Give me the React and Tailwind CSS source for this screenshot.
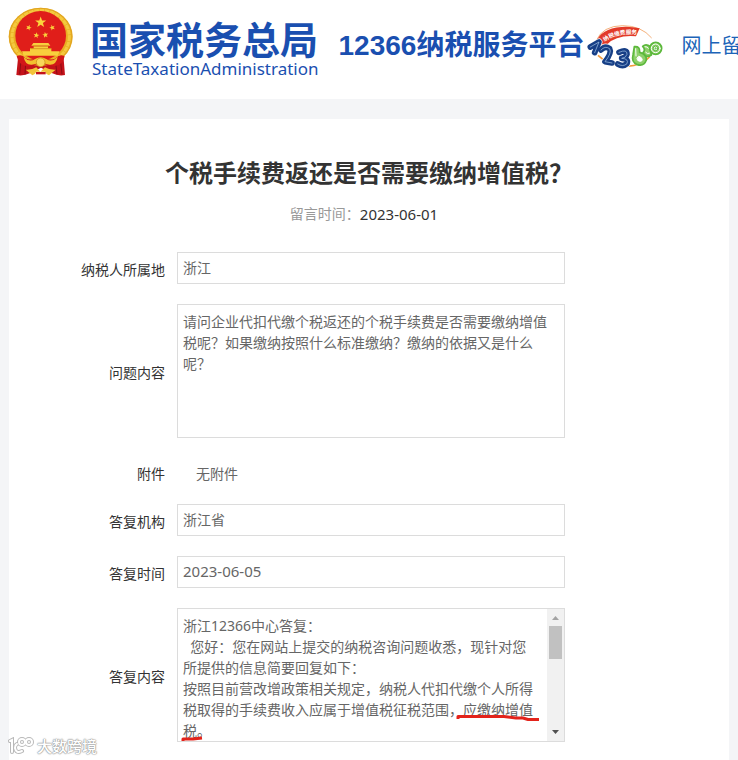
import React from "react";

const QUESTION =
  "请问企业代扣代缴个税返还的个税手续费是否需要缴纳增值税呢？如果缴纳按照什么标准缴纳？缴纳的依据又是什么呢？";

const REPLY = `浙江12366中心答复：
  您好：您在网站上提交的纳税咨询问题收悉，现针对您所提供的信息简要回复如下：
按照目前营改增政策相关规定，纳税人代扣代缴个人所得税取得的手续费收入应属于增值税征税范围，应缴纳增值税。`;

const STAR = "M0,-10 2.4,-3.2 9.5,-3.1 3.8,1.2 5.9,8.1 0,4 -5.9,8.1 -3.8,1.2 -9.5,-3.1 -2.4,-3.2Z";

function Emblem() {
  return (
    <svg className="w-[66px] h-[72px] shrink-0" viewBox="25 15 198 216" aria-hidden="true">
      {/* Red drapes */}
      <path d="M56 162 L50 222 Q72 226 92 216 L124 200 L156 216 Q176 226 196 222 L191 162Z" fill="#c4121a" />
      <path d="M64 176 L60 220 M78 186 L76 220 M182 176 L187 220 M168 186 L172 220" stroke="#8e0c12" strokeWidth="3" />
      {/* Golden wreath */}
      <ellipse cx="123" cy="107" rx="96" ry="87" fill="#e9ae22" />
      <ellipse cx="123" cy="107" rx="86" ry="79" fill="none" stroke="#f4c93f" strokeWidth="9" strokeDasharray="14 2" />
      <ellipse cx="123" cy="107" rx="94" ry="85" fill="none" stroke="#dca021" strokeWidth="2" />
      <ellipse cx="123" cy="104" rx="76" ry="74" fill="#e01e1a" />
      {/* Stars */}
      <g fill="#fbd43c">
        <path d={STAR} transform="translate(123 64) scale(1.75)" />
        <path d={STAR} transform="translate(87 80) scale(.9) rotate(20)" />
        <path d={STAR} transform="translate(158 80) scale(.9) rotate(-20)" />
        <path d={STAR} transform="translate(110 103) scale(.95) rotate(10)" />
        <path d={STAR} transform="translate(137 102) scale(.95) rotate(-10)" />
      </g>
      {/* Gate tower */}
      <path d="M101 126 H146 L152 134 H95Z M102 136 H145 V142 H102Z M91 142 H155 V154 H91Z M67 151 H180 L174 164 H72Z" fill="#f8cf3d" />
      <path d="M99 135 H148 M92 143 H154" stroke="#c97b12" strokeWidth="2" />
      {/* Knot and gear */}
      <path d="M51 166 Q66 158 78 172 Q94 180 110 170 Q123 163 136 170 Q152 180 168 172 Q180 158 195 166 Q190 192 166 195 Q145 196 123 185 Q101 196 80 195 Q57 192 51 166Z" fill="#d21618" />
      <path d="M72 168 Q90 186 106 174 Q123 164 140 174 Q156 186 174 168 Q170 192 150 191 Q136 190 123 181 Q110 190 96 191 Q76 192 72 168Z" fill="#f3c02f" />
      <circle cx="123" cy="184" r="13" fill="#f9d75a" stroke="#c98a15" strokeWidth="2" />
      <path d="M78 206 Q98 207 110 199 L122 212 L136 199 Q148 207 168 206 L148 223 Q140 221 136 212 H110 Q106 221 98 223Z" fill="#f3c43a" />
      <path d="M109 213 H138 V220 H109Z" fill="#c4121a" />
    </svg>
  );
}

function HotlineLogo() {
  return (
    <svg className="w-[77px] h-[50px] shrink-0" viewBox="20 15 231 150" aria-hidden="true">
      <defs>
        <path id="banner-line" d="M76 77 Q116 48 177 56" />
      </defs>
      {/* Orbit */}
      <path d="M50 75 Q70 29 130 29 Q186 29 217 66" fill="none" stroke="#ee8a3a" strokeWidth="2" />
      <path d="M56 118 Q92 153 142 151 Q188 149 211 122" fill="none" stroke="#f19b3d" strokeWidth="5" />
      {/* Banner */}
      <path d="M50 79 Q64 38 126 33 Q154 31 181 37 L170 61 Q112 56 82 86 L66 98Z" fill="#e23a28" />
      <text fontSize="17" fontWeight="700" fill="#fff" fontFamily="Noto Sans CJK SC, sans-serif">
        <textPath href="#banner-line">纳税缴费服务</textPath>
      </text>
      {/* Numerals */}
      <g fill="none" strokeLinecap="round" strokeLinejoin="round">
        <g stroke="#fff" strokeWidth="21">
          <path d="M33 93 L59 78 L46 110" />
          <path d="M65 102 Q77 88 91 98 Q98 111 77 137 L98 141" />
          <path d="M119 109 Q144 98 143 115 Q140 126 127 127 Q149 128 143 143 Q131 154 115 144" />
        </g>
        <g stroke="#173f86" strokeWidth="17">
          <path d="M33 93 L59 78 L46 110" />
          <path d="M65 102 Q77 88 91 98 Q98 111 77 137 L98 141" />
          <path d="M119 109 Q144 98 143 115 Q140 126 127 127 Q149 128 143 143 Q131 154 115 144" />
        </g>
        <g stroke="#a9c9ea" strokeWidth="2">
          <path d="M33 93 L59 78 L46 110" />
          <path d="M65 102 Q77 88 91 98 Q98 111 77 137 L98 141" />
          <path d="M119 109 Q144 98 143 115 Q140 126 127 127 Q149 128 143 143 Q131 154 115 144" />
        </g>
        {/* Handset shapes */}
        <g stroke="#5cb83c" strokeWidth="5">
          <path d="M165 92 Q183 90 181 109 Q203 115 201 132 Q194 152 174 146 Q155 138 161 117Z" fill="#8ed06a" />
          <path d="M169 98 L170 120 M179 121 Q193 127 187 135 Q175 139 173 128Z" fill="#fff" stroke="#fff" strokeWidth="3" />
          <path d="M190 91 Q200 82 213 92 L216 117 Q200 128 191 110 Q200 101 190 91Z" fill="#8ed06a" />
          <circle cx="229" cy="97" r="18" fill="#8ed06a" />
          <circle cx="229" cy="97" r="13" stroke="#fff" strokeWidth="3" />
          <circle cx="229" cy="97" r="7" fill="#fff" strokeWidth="3" />
          <path d="M226 97 H232 M229 94 V100" strokeWidth="2" />
          <path d="M197 92 Q204 91 207 97 M199 109 Q203 115 210 112" stroke="#fff" strokeWidth="3" />
        </g>
      </g>
    </svg>
  );
}

function Watermark() {
  return (
    <div className="absolute left-2 bottom-1 flex items-center gap-[2px] pointer-events-none">
      <svg className="w-[27px] h-[18px]" viewBox="0 0 27 18" fill="none" aria-hidden="true">
        <g stroke="#b9b9b9" strokeWidth="4" strokeLinecap="round">
          <path d="M2 4 L4 3 V15 M14 14 Q8 17 7 11 Q7 8 9 7" />
          <circle cx="14" cy="5" r="3" />
          <circle cx="21" cy="5" r="3" />
        </g>
        <g stroke="#fff" strokeWidth="2" strokeLinecap="round">
          <path d="M2 4 L4 3 V15 M14 14 Q8 17 7 11 Q7 8 9 7" />
          <circle cx="14" cy="5" r="3" />
          <circle cx="21" cy="5" r="3" />
        </g>
      </svg>
      <span className="text-[15px] leading-5 font-medium text-white [text-shadow:0_0_1px_#888,0_0_2px_#999,0_0_1px_#999]">
        大数跨境
      </span>
    </div>
  );
}

function Row({ id, label, children }) {
  return (
    <div className="flex items-center gap-3">
      <label htmlFor={id} className="w-[156px] shrink-0 pt-[3px] text-right text-[#333]">
        {label}
      </label>
      <div className="flex-1 min-w-0">{children}</div>
    </div>
  );
}

function TextField({ id, value, className = "text-sm" }) {
  return (
    <input
      id={id}
      type="text"
      readOnly
      defaultValue={value}
      className={`block w-full h-8 px-[5px] pb-[2px] border border-[#dcdcdc] bg-white text-[#666] outline-none ${className}`}
    />
  );
}

export default function App() {
  return (
    <div className="relative min-h-screen flex flex-col overflow-hidden bg-[#f4f5f7] text-sm font-['Noto_Sans','Noto_Sans_CJK_SC',sans-serif]">
      {/* Site header */}
      <header className="flex items-center h-[99px] pl-2 pb-4 bg-white overflow-hidden">
        <Emblem />
        <div className="ml-4 pt-4 shrink-0 text-[#1a4fb0]">
          <p className="text-[38px] leading-[38px] font-bold">国家税务总局</p>
          <p className="pl-[2px] text-[17px] leading-[22px]">StateTaxationAdministration</p>
        </div>
        <p className="ml-5 pt-2 shrink-0 text-[28px] leading-8 font-bold text-[#1a4fb0] font-['Liberation_Sans','Noto_Sans_CJK_SC',sans-serif]">
          12366纳税服务平台
        </p>
        <div className="ml-[2px] pt-2 shrink-0">
          <HotlineLogo />
        </div>
        <a href="#message" className="ml-[18px] pt-2 shrink-0 text-xl text-[#1c64b8]">
          网上留
        </a>
      </header>

      {/* Message detail */}
      <main className="flex-1 mt-5 mx-[9px] pt-9 bg-white">
        <h1 className="text-center text-2xl leading-9 font-bold text-[#333]">
          个税手续费返还是否需要缴纳增值税？
        </h1>
        <p className="mt-[11px] pr-[10px] flex justify-center items-center leading-6 text-[#999]">
          留言时间：<span className="text-[15px] text-[#333]">2023-06-01</span>
        </p>

        <form className="mt-[26px] pr-[164px] flex flex-col gap-5">
          <Row id="region" label="纳税人所属地">
            <TextField id="region" value="浙江" />
          </Row>
          <Row id="question" label="问题内容">
            <textarea
              id="question"
              readOnly
              defaultValue={QUESTION}
              className="block w-full h-[134px] px-[5px] py-[6px] border border-[#dcdcdc] bg-white leading-[21px] text-[#666] resize-none overflow-hidden outline-none"
            />
          </Row>
          <div className="flex items-center gap-3 h-[26px] pt-[5px]">
            <span className="w-[156px] shrink-0 text-right text-[#333]">附件</span>
            <span className="pl-[19px] text-[#666]">无附件</span>
          </div>
          <Row id="office" label="答复机构">
            <TextField id="office" value="浙江省" />
          </Row>
          <Row id="date" label="答复时间">
            <TextField id="date" value="2023-06-05" className="text-[15px]" />
          </Row>
          <Row id="reply" label="答复内容">
            <div className="relative flex h-[134px] border border-[#dcdcdc]">
              <textarea
                id="reply"
                readOnly
                defaultValue={REPLY}
                className="flex-1 min-w-0 pl-[5px] pr-3 pt-[6px] bg-white leading-[21px] text-[#666] resize-none overflow-hidden outline-none"
              />
              {/* Scrollbar */}
              <div className="w-[17px] flex flex-col items-center justify-between bg-[#f1f1f1]" aria-hidden="true">
                <div className="flex flex-col items-center">
                  <svg className="w-[17px] h-[17px]" viewBox="0 0 17 17">
                    <path d="M5 11 L8.5 7 L12 11Z" fill="#a3a3a3" />
                  </svg>
                  <div className="w-[13px] h-[33px] bg-[#c1c1c1]" />
                </div>
                <svg className="w-[17px] h-[17px]" viewBox="0 0 17 17">
                  <path d="M5 6 L8.5 10 L12 6Z" fill="#505050" />
                </svg>
              </div>
              {/* Red pen marks */}
              <svg className="absolute left-0 top-0 w-[369px] h-[132px] pointer-events-none" viewBox="0 0 369 132" fill="none" stroke="#e3231b" strokeWidth="3" strokeLinejoin="round">
                <path d="M280 110 V107.5 H326 L338 109 H345 L350 110.5 H361" />
                <path d="M5 132 V130 H15 L24 129" />
              </svg>
            </div>
          </Row>
        </form>
      </main>

      <Watermark />
    </div>
  );
}
